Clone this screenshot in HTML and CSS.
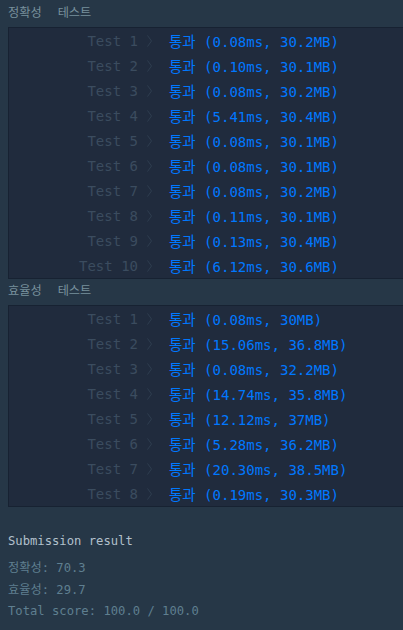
FILE: index.html
```
<!DOCTYPE html>
<html lang="ko">
<head>
<meta charset="utf-8">
<link rel="stylesheet" href="styles.css">
</head>
<body>
<div class="group-title"><span>정확성</span><span>테스트</span></div>
<div class="box">
  <div class="row"><span class="label">Test 1</span><svg class="chev" viewBox="0 0 5 12"><path d="M0.5 0.5 L4.5 6 L0.5 11.5"/></svg><span class="status"><span class="ko">통과</span> (0.08ms, 30.2MB)</span></div>
  <div class="row"><span class="label">Test 2</span><svg class="chev" viewBox="0 0 5 12"><path d="M0.5 0.5 L4.5 6 L0.5 11.5"/></svg><span class="status"><span class="ko">통과</span> (0.10ms, 30.1MB)</span></div>
  <div class="row"><span class="label">Test 3</span><svg class="chev" viewBox="0 0 5 12"><path d="M0.5 0.5 L4.5 6 L0.5 11.5"/></svg><span class="status"><span class="ko">통과</span> (0.08ms, 30.2MB)</span></div>
  <div class="row"><span class="label">Test 4</span><svg class="chev" viewBox="0 0 5 12"><path d="M0.5 0.5 L4.5 6 L0.5 11.5"/></svg><span class="status"><span class="ko">통과</span> (5.41ms, 30.4MB)</span></div>
  <div class="row"><span class="label">Test 5</span><svg class="chev" viewBox="0 0 5 12"><path d="M0.5 0.5 L4.5 6 L0.5 11.5"/></svg><span class="status"><span class="ko">통과</span> (0.08ms, 30.1MB)</span></div>
  <div class="row"><span class="label">Test 6</span><svg class="chev" viewBox="0 0 5 12"><path d="M0.5 0.5 L4.5 6 L0.5 11.5"/></svg><span class="status"><span class="ko">통과</span> (0.08ms, 30.1MB)</span></div>
  <div class="row"><span class="label">Test 7</span><svg class="chev" viewBox="0 0 5 12"><path d="M0.5 0.5 L4.5 6 L0.5 11.5"/></svg><span class="status"><span class="ko">통과</span> (0.08ms, 30.2MB)</span></div>
  <div class="row"><span class="label">Test 8</span><svg class="chev" viewBox="0 0 5 12"><path d="M0.5 0.5 L4.5 6 L0.5 11.5"/></svg><span class="status"><span class="ko">통과</span> (0.11ms, 30.1MB)</span></div>
  <div class="row"><span class="label">Test 9</span><svg class="chev" viewBox="0 0 5 12"><path d="M0.5 0.5 L4.5 6 L0.5 11.5"/></svg><span class="status"><span class="ko">통과</span> (0.13ms, 30.4MB)</span></div>
  <div class="row"><span class="label">Test 10</span><svg class="chev" viewBox="0 0 5 12"><path d="M0.5 0.5 L4.5 6 L0.5 11.5"/></svg><span class="status"><span class="ko">통과</span> (6.12ms, 30.6MB)</span></div>
</div>
<div class="group-title"><span>효율성</span><span>테스트</span></div>
<div class="box">
  <div class="row"><span class="label">Test 1</span><svg class="chev" viewBox="0 0 5 12"><path d="M0.5 0.5 L4.5 6 L0.5 11.5"/></svg><span class="status"><span class="ko">통과</span> (0.08ms, 30MB)</span></div>
  <div class="row"><span class="label">Test 2</span><svg class="chev" viewBox="0 0 5 12"><path d="M0.5 0.5 L4.5 6 L0.5 11.5"/></svg><span class="status"><span class="ko">통과</span> (15.06ms, 36.8MB)</span></div>
  <div class="row"><span class="label">Test 3</span><svg class="chev" viewBox="0 0 5 12"><path d="M0.5 0.5 L4.5 6 L0.5 11.5"/></svg><span class="status"><span class="ko">통과</span> (0.08ms, 32.2MB)</span></div>
  <div class="row"><span class="label">Test 4</span><svg class="chev" viewBox="0 0 5 12"><path d="M0.5 0.5 L4.5 6 L0.5 11.5"/></svg><span class="status"><span class="ko">통과</span> (14.74ms, 35.8MB)</span></div>
  <div class="row"><span class="label">Test 5</span><svg class="chev" viewBox="0 0 5 12"><path d="M0.5 0.5 L4.5 6 L0.5 11.5"/></svg><span class="status"><span class="ko">통과</span> (12.12ms, 37MB)</span></div>
  <div class="row"><span class="label">Test 6</span><svg class="chev" viewBox="0 0 5 12"><path d="M0.5 0.5 L4.5 6 L0.5 11.5"/></svg><span class="status"><span class="ko">통과</span> (5.28ms, 36.2MB)</span></div>
  <div class="row"><span class="label">Test 7</span><svg class="chev" viewBox="0 0 5 12"><path d="M0.5 0.5 L4.5 6 L0.5 11.5"/></svg><span class="status"><span class="ko">통과</span> (20.30ms, 38.5MB)</span></div>
  <div class="row"><span class="label">Test 8</span><svg class="chev" viewBox="0 0 5 12"><path d="M0.5 0.5 L4.5 6 L0.5 11.5"/></svg><span class="status"><span class="ko">통과</span> (0.19ms, 30.3MB)</span></div>
</div>
<div class="result">
  <div class="result-title">Submission result</div>
  <div class="result-line">정확성: 70.3</div>
  <div class="result-line">효율성: 29.7</div>
  <div class="result-line">Total score: 100.0 / 100.0</div>
</div>
</body>
</html>
```
FILE: styles.css
```
html, body {
  margin: 0;
  background: #263747;
}
body {
  padding: 4px 0 0 8px;
  font-family: "DejaVu Sans Mono", "Noto Sans CJK KR", monospace;
}
.group-title {
  display: flex;
  gap: 16px;
  font-size: 12.2px;
  line-height: 18px;
  color: #78909c;
  margin-bottom: 5px;
}
.box {
  background: #202b3d;
  border: 1px solid #172232;
  border-right: none;
  margin-bottom: 3px;
}
.row {
  display: flex;
  align-items: center;
  height: 25px;
  font-size: 14px;
  white-space: pre;
}
.label {
  width: 129px;
  text-align: right;
  color: #3b4c5f;
}
.chev {
  width: 5px;
  height: 12px;
  margin-left: 9px;
  fill: none;
  stroke: #2f3e50;
  stroke-width: 1;
}
.status {
  margin-left: 17px;
  color: #0078ff;
}
.ko {
  font-family: "Noto Sans CJK KR", sans-serif;
  font-size: 14.5px;
  color: #0078ff;
}
.result {
  margin-top: 24px;
  font-size: 12.2px;
}
.result-title {
  color: #b2c0cc;
  line-height: 20px;
  margin-bottom: 7px;
}
.result-line {
  color: #5f7f90;
  line-height: 21.5px;
}
```
